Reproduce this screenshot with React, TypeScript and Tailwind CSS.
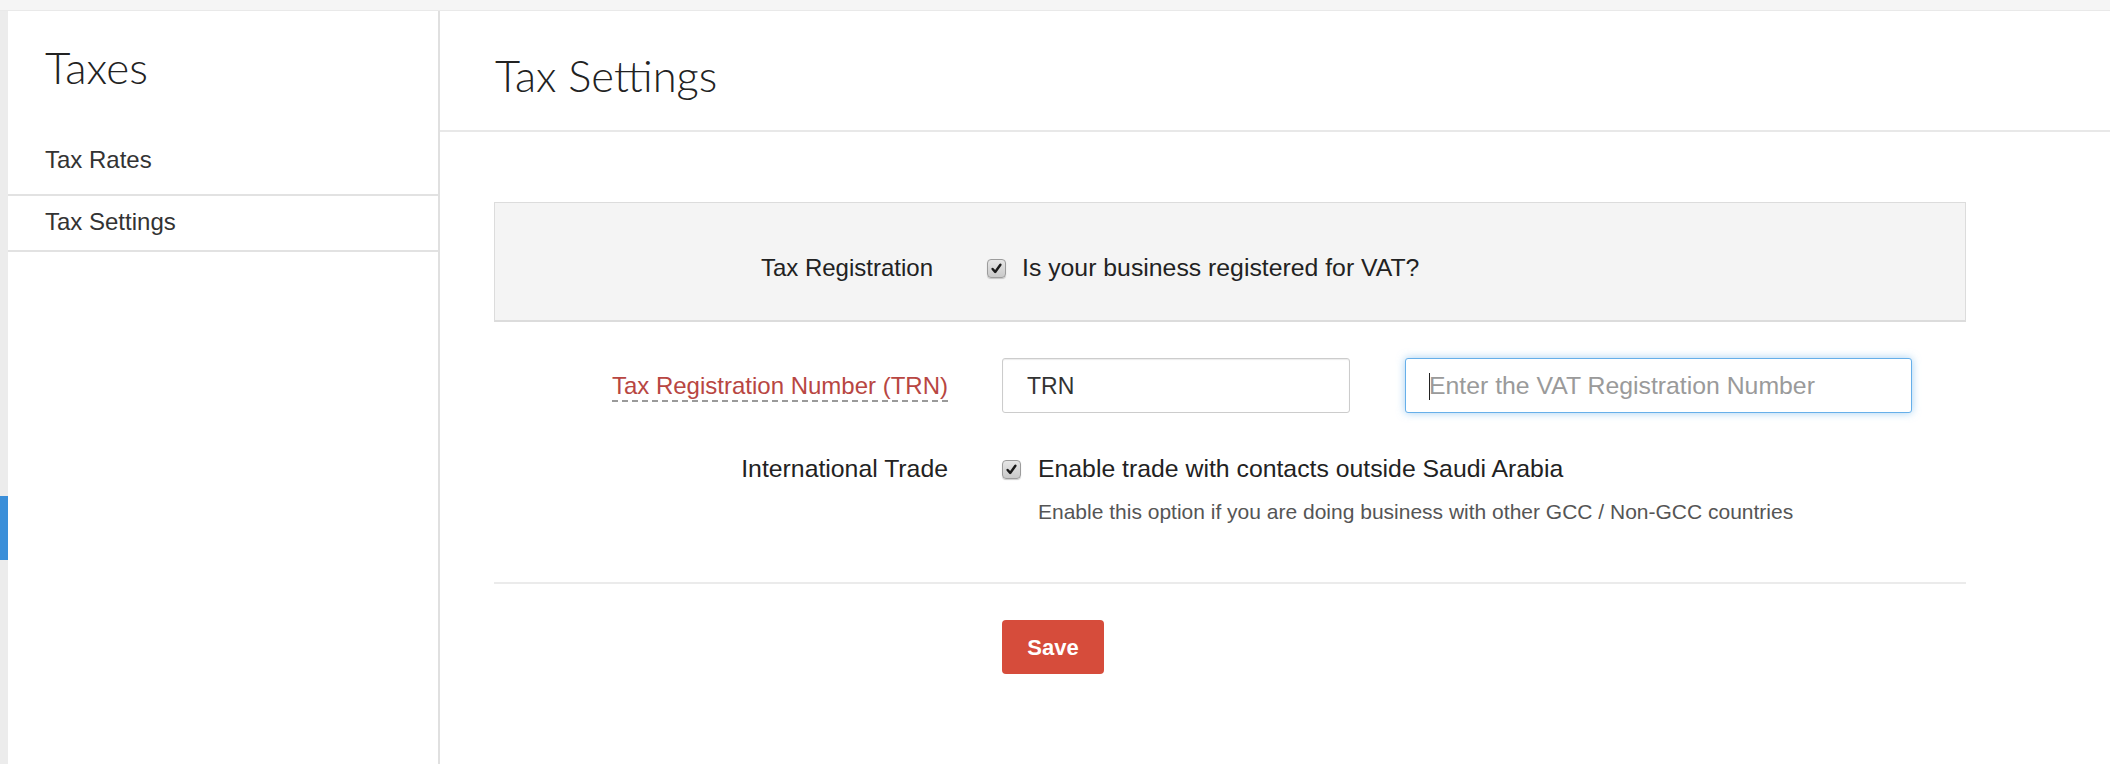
import React from "react";

function Check() {
  return (
    <span className="inline-flex h-[19px] w-[19px] shrink-0 items-center justify-center rounded-[4px] border border-[#9c9c9c] bg-linear-to-b from-[#e6e6e6] to-[#c9c9c9] shadow-[0_1px_1px_rgba(0,0,0,0.2)]">
      <svg width="13" height="13" viewBox="0 0 16 16">
        <path d="M3.2 8.6 L6.4 12.2 L12.8 3.4" fill="none" stroke="#1a1a1a" strokeWidth="3" strokeLinecap="round" strokeLinejoin="round" />
      </svg>
    </span>
  );
}

export default function App() {
  return (
    <div className="flex h-screen w-full flex-col overflow-hidden bg-white font-['Liberation_Sans',Arial,sans-serif] text-[#333]">
      <div className="h-[11px] shrink-0 border-b border-[#e9e9e9] bg-[#f5f5f5]" />
      <div className="flex flex-1">
        <div className="w-[8px] shrink-0 bg-[#ececec]">
          <div className="mt-[485px] h-[64px] w-[8px] bg-[#3b8fd9]" />
        </div>
        <aside className="w-[432px] shrink-0 border-r-2 border-[#e0e0e0]">
          <h1 className="mt-[34px] pl-[37px] font-['Lato',sans-serif] text-[44px] font-light leading-[44px] text-[#222]">
            Taxes
          </h1>
          <nav className="mt-[57px] text-[24px] leading-[28px] text-[#333]">
            <div className="border-b-2 border-[#e2e2e2] pb-[20px] pl-[37px]">Tax Rates</div>
            <div className="border-b-2 border-[#e2e2e2] pb-[14px] pl-[37px] pt-[12px]">Tax Settings</div>
          </nav>
        </aside>
        <main className="flex-1">
          <header className="h-[121px] border-b-2 border-[#e8e8e8] pl-[55px] pt-[43px]">
            <h2 className="font-['Lato',sans-serif] text-[43.5px] font-light leading-[43.5px] text-[#222]">Tax Settings</h2>
          </header>
          <div className="pl-[54px] pt-[70px]">
            <div className="w-[1472px]">
              <div className="grid grid-cols-[438px_1fr] items-center gap-x-[54px] border border-b-2 border-[#dcdcdc] bg-[#f4f4f4] pb-[38px] pt-[51px] leading-[28px]">
                <div className="text-right text-[24px] text-[#222]">Tax Registration</div>
                <div className="flex items-center gap-[16px]">
                  <Check />
                  <span className="text-[24.8px] text-[#222]">Is your business registered for VAT?</span>
                </div>
              </div>

              <div className="mt-[36px] grid grid-cols-[454px_1fr] items-center gap-x-[54px] leading-[28px]">
                <div className="text-right text-[24px]">
                  <span className="border-b-2 border-dashed border-[#9a9a9a] pb-[1px] text-[#b84642]">
                    Tax Registration Number (TRN)
                  </span>
                </div>
                <div className="flex gap-[55px]">
                  <div className="flex h-[55px] w-[348px] items-center rounded-[3px] border border-[#cccccc] bg-white pl-[24px] text-[23px] text-[#333] shadow-[inset_0_1px_1px_rgba(0,0,0,0.08)]">
                    TRN
                  </div>
                  <div className="relative flex h-[55px] w-[507px] items-center rounded-[3px] border border-[#66afe9] bg-white pl-[23px] text-[24.8px] text-[#9a9a9a] shadow-[0_0_8px_rgba(102,175,233,0.6)]">
                    Enter the VAT Registration Number
                    <span className="absolute left-[23px] top-[14px] h-[27px] w-[1px] bg-[#222]" />
                  </div>
                </div>
              </div>

              <div className="mt-[42px] grid grid-cols-[454px_1fr] gap-x-[54px] leading-[28px]">
                <div className="text-right text-[24.8px] text-[#222]">International Trade</div>
                <div>
                  <div className="flex items-center gap-[17px]">
                    <Check />
                    <span className="text-[24.8px] text-[#222]">Enable trade with contacts outside Saudi Arabia</span>
                  </div>
                  <div className="mt-[17px] pl-[36px] text-[21px] leading-[24px] text-[#555]">
                    Enable this option if you are doing business with other GCC / Non-GCC countries
                  </div>
                </div>
              </div>

              <div className="mt-[58px] h-[2px] bg-[#ebebeb]" />

              <div className="mt-[36px] pl-[508px]">
                <button className="h-[54px] w-[102px] rounded-[4px] bg-[#d64c3b] text-[22px] font-bold text-white">
                  Save
                </button>
              </div>
            </div>
          </div>
        </main>
      </div>
    </div>
  );
}
